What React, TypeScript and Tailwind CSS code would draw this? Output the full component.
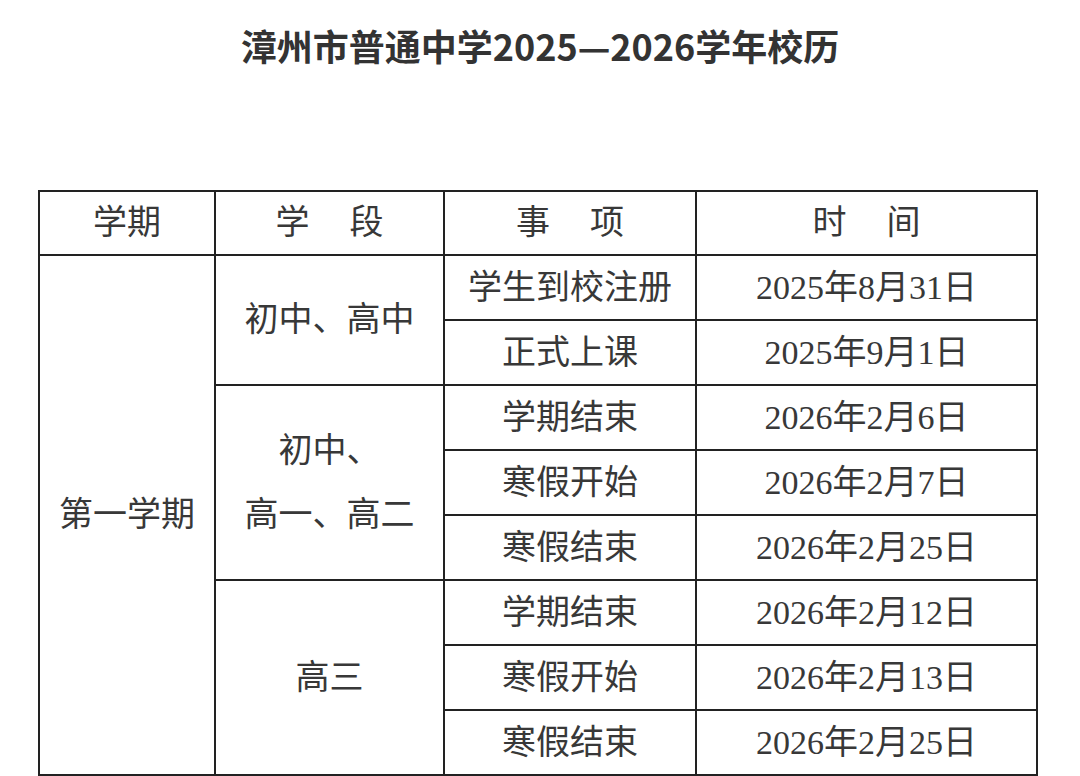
import React from "react";

type Row = { item: string; date: string };

const serif = { fontFamily: '"Liberation Serif", "Noto Sans CJK SC", serif' };

// 空格分开的表头，两个字之间留出间距
const Spaced = ({ a, b }: { a: string; b: string }) => (
  <span className="inline-flex gap-[40px]">
    <span>{a}</span>
    <span>{b}</span>
  </span>
);

const junior: Row[] = [
  { item: "学生到校注册", date: "2025年8月31日" },
  { item: "正式上课", date: "2025年9月1日" },
];

const middle: Row[] = [
  { item: "学期结束", date: "2026年2月6日" },
  { item: "寒假开始", date: "2026年2月7日" },
  { item: "寒假结束", date: "2026年2月25日" },
];

const senior: Row[] = [
  { item: "学期结束", date: "2026年2月12日" },
  { item: "寒假开始", date: "2026年2月13日" },
  { item: "寒假结束", date: "2026年2月25日" },
];

const cell = "border-2 border-[#222] text-center align-middle p-0";

export default function App() {
  return (
    <div className="min-h-screen bg-white text-[#383838]">
      <h1
        className="pt-[25px] text-center text-[36px] leading-[40px] font-bold text-[#333]"
        style={{ fontFamily: '"Noto Sans CJK SC", "Noto Sans", sans-serif' }}
      >
        漳州市普通中学2025—2026学年校历
      </h1>

      <div className="mt-[125px] pl-[38px]">
        <table
          className="w-[998px] border-collapse table-fixed text-[34px] leading-[40px]"
          style={serif}
        >
          <colgroup>
            <col className="w-[176px]" />
            <col className="w-[229px]" />
            <col className="w-[252px]" />
            <col className="w-[341px]" />
          </colgroup>
          <thead>
            <tr className="h-[64px]">
              <th className={`${cell} font-normal`}>学期</th>
              <th className={`${cell} font-normal`}>
                <Spaced a="学" b="段" />
              </th>
              <th className={`${cell} font-normal`}>
                <Spaced a="事" b="项" />
              </th>
              <th className={`${cell} font-normal`}>
                <Spaced a="时" b="间" />
              </th>
            </tr>
          </thead>
          <tbody>
            {junior.map((r, i) => (
              <tr key={"j" + i} className="h-[65px]">
                {i === 0 && (
                  <td rowSpan={8} className={cell}>
                    第一学期
                  </td>
                )}
                {i === 0 && (
                  <td rowSpan={2} className={cell}>
                    初中、高中
                  </td>
                )}
                <td className={cell}>{r.item}</td>
                <td className={cell}>{r.date}</td>
              </tr>
            ))}
            {middle.map((r, i) => (
              <tr key={"m" + i} className="h-[65px]">
                {i === 0 && (
                  <td rowSpan={3} className={`${cell} leading-[64px]`}>
                    初中、
                    <br />
                    高一、高二
                  </td>
                )}
                <td className={cell}>{r.item}</td>
                <td className={cell}>{r.date}</td>
              </tr>
            ))}
            {senior.map((r, i) => (
              <tr key={"s" + i} className="h-[65px]">
                {i === 0 && (
                  <td rowSpan={3} className={cell}>
                    高三
                  </td>
                )}
                <td className={cell}>{r.item}</td>
                <td className={cell}>{r.date}</td>
              </tr>
            ))}
          </tbody>
        </table>
      </div>
    </div>
  );
}
